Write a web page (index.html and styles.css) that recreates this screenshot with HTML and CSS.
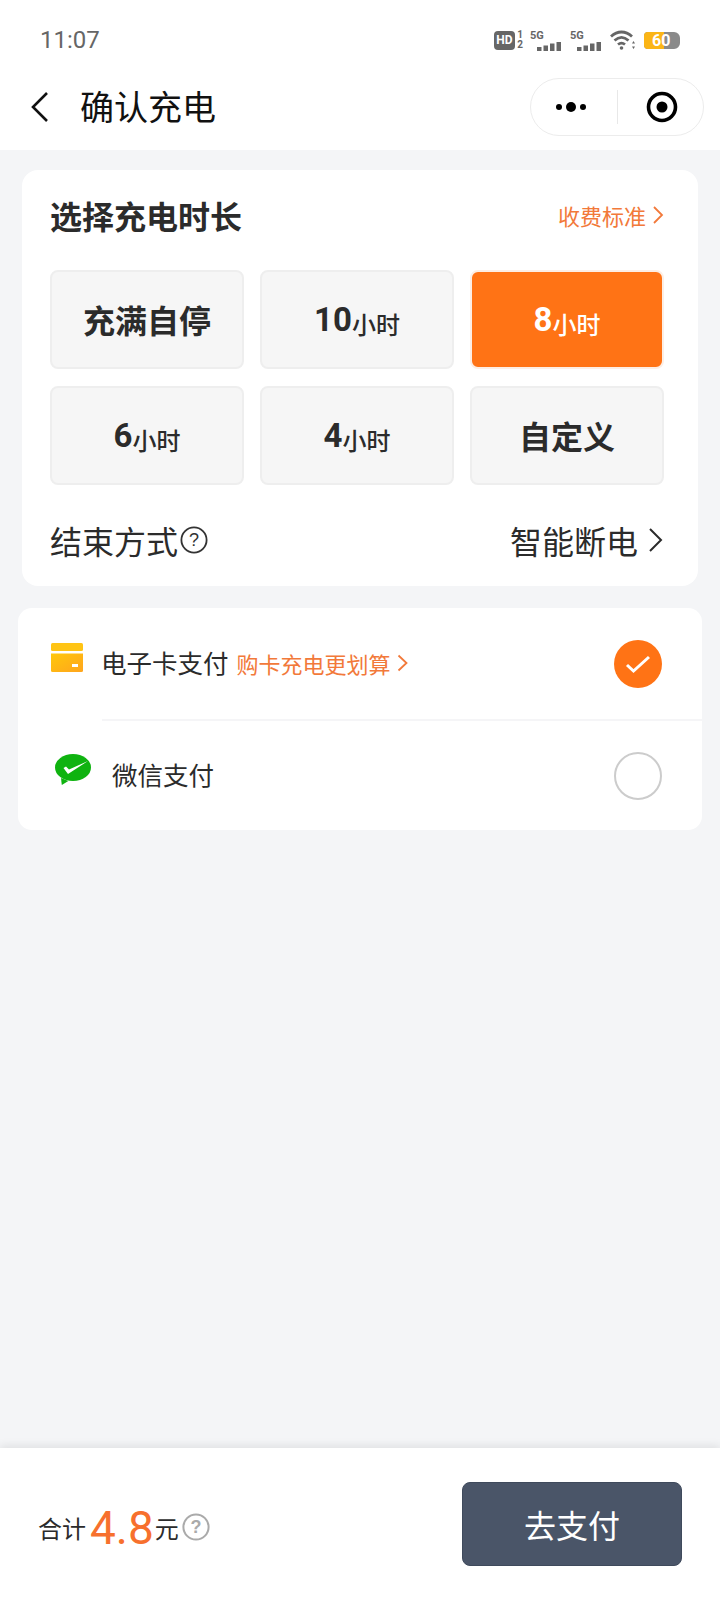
FILE: index.html
```html
<!DOCTYPE html>
<html lang="zh-CN">
<head>
    <meta charset="UTF-8">
    <meta name="viewport" content="width=device-width, initial-scale=1.0">
    <title>确认充电</title>
    <link rel="stylesheet" href="styles.css">
</head>
<body>
    <div class="top">
        <div class="status-bar">
            <span class="clock">11:07</span>
            <div class="status-icons">
                <span class="hd">HD</span>
                <span class="sim-nums"><span>1</span><span>2</span></span>
                <span class="signal">
                    <span class="signal-label">5G</span>
                    <svg width="24" height="9" viewBox="0 0 24 9"><path d="M0 5h4.500v4H0zM6.500 3.500H11V9H6.500zM13 1.500h4.500V9H13zM19.500 0H24v9h-4.500z" fill="#666"/></svg>
                </span>
                <span class="signal">
                    <span class="signal-label">5G</span>
                    <svg width="24" height="9" viewBox="0 0 24 9"><path d="M0 5h4.500v4H0zM6.500 3.500H11V9H6.500zM13 1.500h4.500V9H13zM19.500 0H24v9h-4.500z" fill="#666"/></svg>
                </span>
                <svg class="wifi" width="26" height="20" viewBox="0 0 26 20" fill="none" stroke="#666" stroke-width="2.800">
                    <path d="M1 6.500c6.500-6 14.500-6 21 0"/>
                    <path d="M4.500 10.500c4.500-4 9.500-4 14 0"/>
                    <path d="M8 14.500c2.500-2 4.500-2 7 0"/>
                    <circle cx="11.500" cy="18" r="1.800" fill="#666" stroke="none"/>
                    <path d="m23.500 11 1.500 2.500h-3zM23.500 19 22 16.500h3z" fill="#666" stroke="none"/>
                </svg>
                <span class="battery"><span class="battery-fill"></span><span class="battery-num">60</span></span>
            </div>
        </div>
        <div class="nav-bar">
            <svg class="back" width="20" height="32" viewBox="0 0 20 32" fill="none" stroke="#111" stroke-width="2.600"><path d="M17 2 3 16l14 14"/></svg>
            <h1 class="nav-title">确认充电</h1>
            <div class="capsule">
                <span class="capsule-dots"><i></i><b></b><i></i></span>
                <span class="capsule-line"></span>
                <svg width="32" height="32" viewBox="0 0 32 32"><circle cx="16" cy="16" r="13.500" fill="none" stroke="#000" stroke-width="3.600"/><circle cx="16" cy="16" r="5.500" fill="#000"/></svg>
            </div>
        </div>
    </div>

    <main class="content">
        <section class="card">
            <div class="card-head">
                <h2>选择充电时长</h2>
                <span class="fee-link">收费标准
                    <svg width="12" height="20" viewBox="0 0 12 20" fill="none" stroke="#f2793a" stroke-width="1.800"><path d="m2 2 8 8-8 8"/></svg>
                </span>
            </div>
            <div class="tile-grid">
                <div class="tile tile-big">充满自停</div>
                <div class="tile">10<small>小时</small></div>
                <div class="tile tile-on">8<small>小时</small></div>
                <div class="tile">6<small>小时</small></div>
                <div class="tile">4<small>小时</small></div>
                <div class="tile tile-big">自定义</div>
            </div>
            <div class="end-row">
                <span class="end-label">结束方式
                    <svg width="28" height="28" viewBox="0 0 28 28"><circle cx="14" cy="14" r="12.600" fill="none" stroke="#333" stroke-width="1.800"/><text x="14" y="20" text-anchor="middle" class="help-mark">?</text></svg>
                </span>
                <span class="end-value">智能断电
                    <svg width="16" height="26" viewBox="0 0 16 26" fill="none" stroke="#2b2b2b" stroke-width="2"><path d="m3 2 11 11L3 24"/></svg>
                </span>
            </div>
        </section>

        <section class="pay-card">
            <div class="pay-row pay-row-first">
                <svg class="pay-icon-card" width="32" height="30" viewBox="0 0 32 30">
                    <defs><linearGradient id="cardFill" x1="0" y1="0" x2="1" y2="1"><stop offset="0" stop-color="#ffc80a"/><stop offset="1" stop-color="#ffa51e"/></linearGradient></defs>
                    <rect width="32" height="8" rx="1.500" fill="#ffc414"/>
                    <path d="M0 10.500h32V27.500a1.500 1.500 0 0 1-1.500 1.500H1.500A1.500 1.500 0 0 1 0 27.500z" fill="url(#cardFill)"/>
                    <rect x="21" y="21" width="6" height="3" fill="#fff"/>
                </svg>
                <span class="pay-name">电子卡支付</span>
                <span class="pay-promo">购卡充电更划算
                    <svg width="11" height="18" viewBox="0 0 11 18" fill="none" stroke="#f2793a" stroke-width="1.800"><path d="m1.500 1.500 8 7.500-8 7.500"/></svg>
                </span>
                <span class="radio radio-on">
                    <svg width="26" height="20" viewBox="0 0 26 20" fill="none" stroke="#fff" stroke-width="3"><path d="m2 11 6.500 6L24 3"/></svg>
                </span>
            </div>
            <div class="pay-line"></div>
            <div class="pay-row">
                <svg class="pay-icon-wx" width="36" height="32" viewBox="0 0 36 32">
                    <ellipse cx="18" cy="13.500" rx="18" ry="13.500" fill="#0fb310"/>
                    <path d="m6 24 .8 7 6.500-4z" fill="#0fb310"/>
                    <path d="M8.500 14 13 20 33 7 14 15.500 11 12.500z" fill="#fff"/>
                </svg>
                <span class="pay-name pay-name-wx">微信支付</span>
                <span class="radio"></span>
            </div>
        </section>
    </main>

    <footer class="bottom-bar">
        <div class="total">
            <span>合计</span><span class="total-num">4.8</span><span>元</span>
            <svg width="28" height="28" viewBox="0 0 28 28"><circle cx="14" cy="14" r="12.600" fill="none" stroke="#aaa" stroke-width="2"/><text x="14" y="20" text-anchor="middle" class="help-mark help-mark-gray">?</text></svg>
        </div>
        <button class="pay-btn">去支付</button>
    </footer>
</body>
</html>
```

FILE: styles.css
```css
* {
    box-sizing: border-box;
}
body {
    margin: 0;
    height: 1600px;
    display: flex;
    flex-direction: column;
    font-family: 'Noto Sans CJK SC', 'Noto Sans', sans-serif;
    color: #2b2b2b;
    background-color: #f4f5f7;
}
.top {
    background: white;
    height: 150px;
}
.status-bar {
    height: 80px;
    padding: 0 40px 0 40px;
    display: flex;
    align-items: center;
    justify-content: space-between;
}
.clock {
    font-family: 'Roboto', sans-serif;
    font-size: 24px;
    color: #666;
}
.status-icons {
    display: flex;
    align-items: center;
    color: #666;
}
.hd {
    width: 21px;
    height: 19px;
    border-radius: 4px;
    background-color: #666;
    color: white;
    font: bold 12px 'Roboto', sans-serif;
    display: flex;
    align-items: center;
    justify-content: center;
}
.sim-nums {
    display: flex;
    flex-direction: column;
    width: 8px;
    margin-left: 1px;
    font: bold 10px/10px 'Roboto', sans-serif;
    text-align: center;
}
.signal {
    display: flex;
    flex-direction: column;
    width: 31px;
    height: 21px;
    margin-left: 6px;
}
.signal-label {
    font: bold 11px/11px 'Roboto', sans-serif;
}
.signal svg {
    align-self: flex-end;
    margin-top: 1px;
}
.signal + .signal {
    margin-left: 9px;
}
.wifi {
    margin-left: 9px;
}
.battery {
    position: relative;
    width: 36px;
    height: 17px;
    margin-left: 8px;
    border-radius: 4px 6px 6px 4px;
    background-color: #8a8a8a;
    overflow: hidden;
}
.battery-fill {
    display: block;
    width: 20px;
    height: 17px;
    background-color: #fbb516;
}
.battery-num {
    position: absolute;
    left: 8px;
    top: 0;
    font: bold 16px/17px 'Roboto', sans-serif;
    color: white;
}
.nav-bar {
    height: 70px;
    padding: 0 17px 8px 30px;
    display: flex;
    align-items: center;
}
.back {
    margin-top: -8px;
}
.nav-title {
    margin: -12px 0 0 30px;
    font-size: 34px;
    font-weight: 400;
    color: #111;
    flex: 1;
}
.capsule {
    width: 174px;
    height: 58px;
    margin-top: -8px;
    margin-right: -1px;
    border: 1px solid #ececec;
    border-radius: 29px;
    display: flex;
    align-items: center;
    padding-left: 25px;
}
.capsule-dots {
    display: flex;
    align-items: center;
    gap: 4px;
    width: 36px;
}
.capsule-dots i {
    width: 6px;
    height: 6px;
    border-radius: 50%;
    background-color: #000;
}
.capsule-dots b {
    width: 10px;
    height: 10px;
    border-radius: 50%;
    background-color: #000;
}
.capsule-line {
    width: 1px;
    height: 34px;
    margin: 0 28px 0 25px;
    background-color: #e8e8e8;
}
.content {
    flex: 1;
    padding-top: 20px;
}
.card {
    margin: 0 22px;
    padding: 0 34px 8px 28px;
    background: white;
    border-radius: 16px;
}
.card-head {
    height: 100px;
    padding-bottom: 10px;
    display: flex;
    align-items: center;
    justify-content: space-between;
}
.card-head h2 {
    margin: 0;
    font-size: 32px;
    font-weight: 700;
}
.fee-link {
    display: flex;
    align-items: center;
    gap: 6px;
    font-size: 22px;
    color: #f2793a;
}
.tile-grid {
    display: grid;
    grid-template-columns: repeat(3, 194px);
    grid-auto-rows: 99px;
    column-gap: 16px;
    row-gap: 17px;
}
.tile {
    display: flex;
    align-items: center;
    justify-content: center;
    background-color: #f6f6f6;
    border: 2px solid #eeeeee;
    border-radius: 8px;
    font-family: 'Roboto', 'Noto Sans CJK SC', sans-serif;
    font-size: 33px;
    font-weight: 700;
}
.tile small {
    font-family: 'Noto Sans CJK SC', sans-serif;
    font-size: 24px;
    font-weight: 500;
    margin-top: 7px;
}
.tile-big {
    font-family: 'Noto Sans CJK SC', sans-serif;
    font-size: 32px;
    padding-bottom: 2px;
}
.tile-on {
    background-color: #ff7315;
    border-color: #fdeee4;
    color: white;
}
.end-row {
    height: 72px;
    margin-top: 21px;
    padding-bottom: 4px;
    display: flex;
    align-items: center;
    justify-content: space-between;
    font-size: 32px;
}
.end-label, .end-value {
    display: flex;
    align-items: center;
}
.end-label svg {
    margin-left: 2px;
}
.end-value {
    margin-right: 1px;
}
.end-value svg {
    margin-left: 9px;
}
.help-mark {
    font: 18px 'Liberation Sans', sans-serif;
    fill: #333;
}
.help-mark-gray {
    font-weight: bold;
    fill: #aaa;
}
.pay-card {
    margin: 22px 18px 0;
    background: white;
    border-radius: 14px;
}
.pay-row {
    height: 109px;
    padding: 0 40px 0 33px;
    display: flex;
    align-items: center;
}
.pay-row-first {
    height: 111px;
    padding-top: 1px;
}
.pay-icon-card {
    margin-top: -12px;
}
.pay-icon-wx {
    margin: -12px 0 0 4px;
}
.pay-name {
    margin: -5px 0 0 18px;
    font-size: 25.500px;
}
.pay-name-wx {
    margin-left: 21px;
}
.pay-promo {
    margin: -3px 0 0 8px;
    display: flex;
    align-items: center;
    gap: 6px;
    font-size: 22px;
    color: #f2793a;
}
.radio {
    width: 48px;
    height: 48px;
    margin-left: auto;
    border: 2px solid #cccccc;
    border-radius: 50%;
}
.radio-on {
    border: none;
    background-color: #ff7315;
    display: flex;
    align-items: center;
    justify-content: center;
}
.pay-line {
    height: 2px;
    margin-left: 84px;
    background-color: #f5f5f7;
}
.bottom-bar {
    height: 152px;
    padding: 34px 38px 34px 38px;
    background: white;
    box-shadow: 0 -3px 8px rgba(0,0,0,0.08);
    display: flex;
    align-items: center;
    justify-content: space-between;
}
.total {
    display: flex;
    align-items: center;
    margin-top: 6px;
    font-size: 24px;
}
.total svg {
    margin-left: 3px;
}
.total-num {
    margin: 2px 1px 0 4px;
    font-family: 'Roboto', sans-serif;
    font-size: 46px;
    line-height: 1;
    color: #f7702d;
}
.pay-btn {
    width: 220px;
    height: 84px;
    background-color: #4a5568;
    border: 1px solid #3f4a5c;
    border-radius: 8px;
    font-family: inherit;
    font-size: 32px;
    color: white;
}
```
